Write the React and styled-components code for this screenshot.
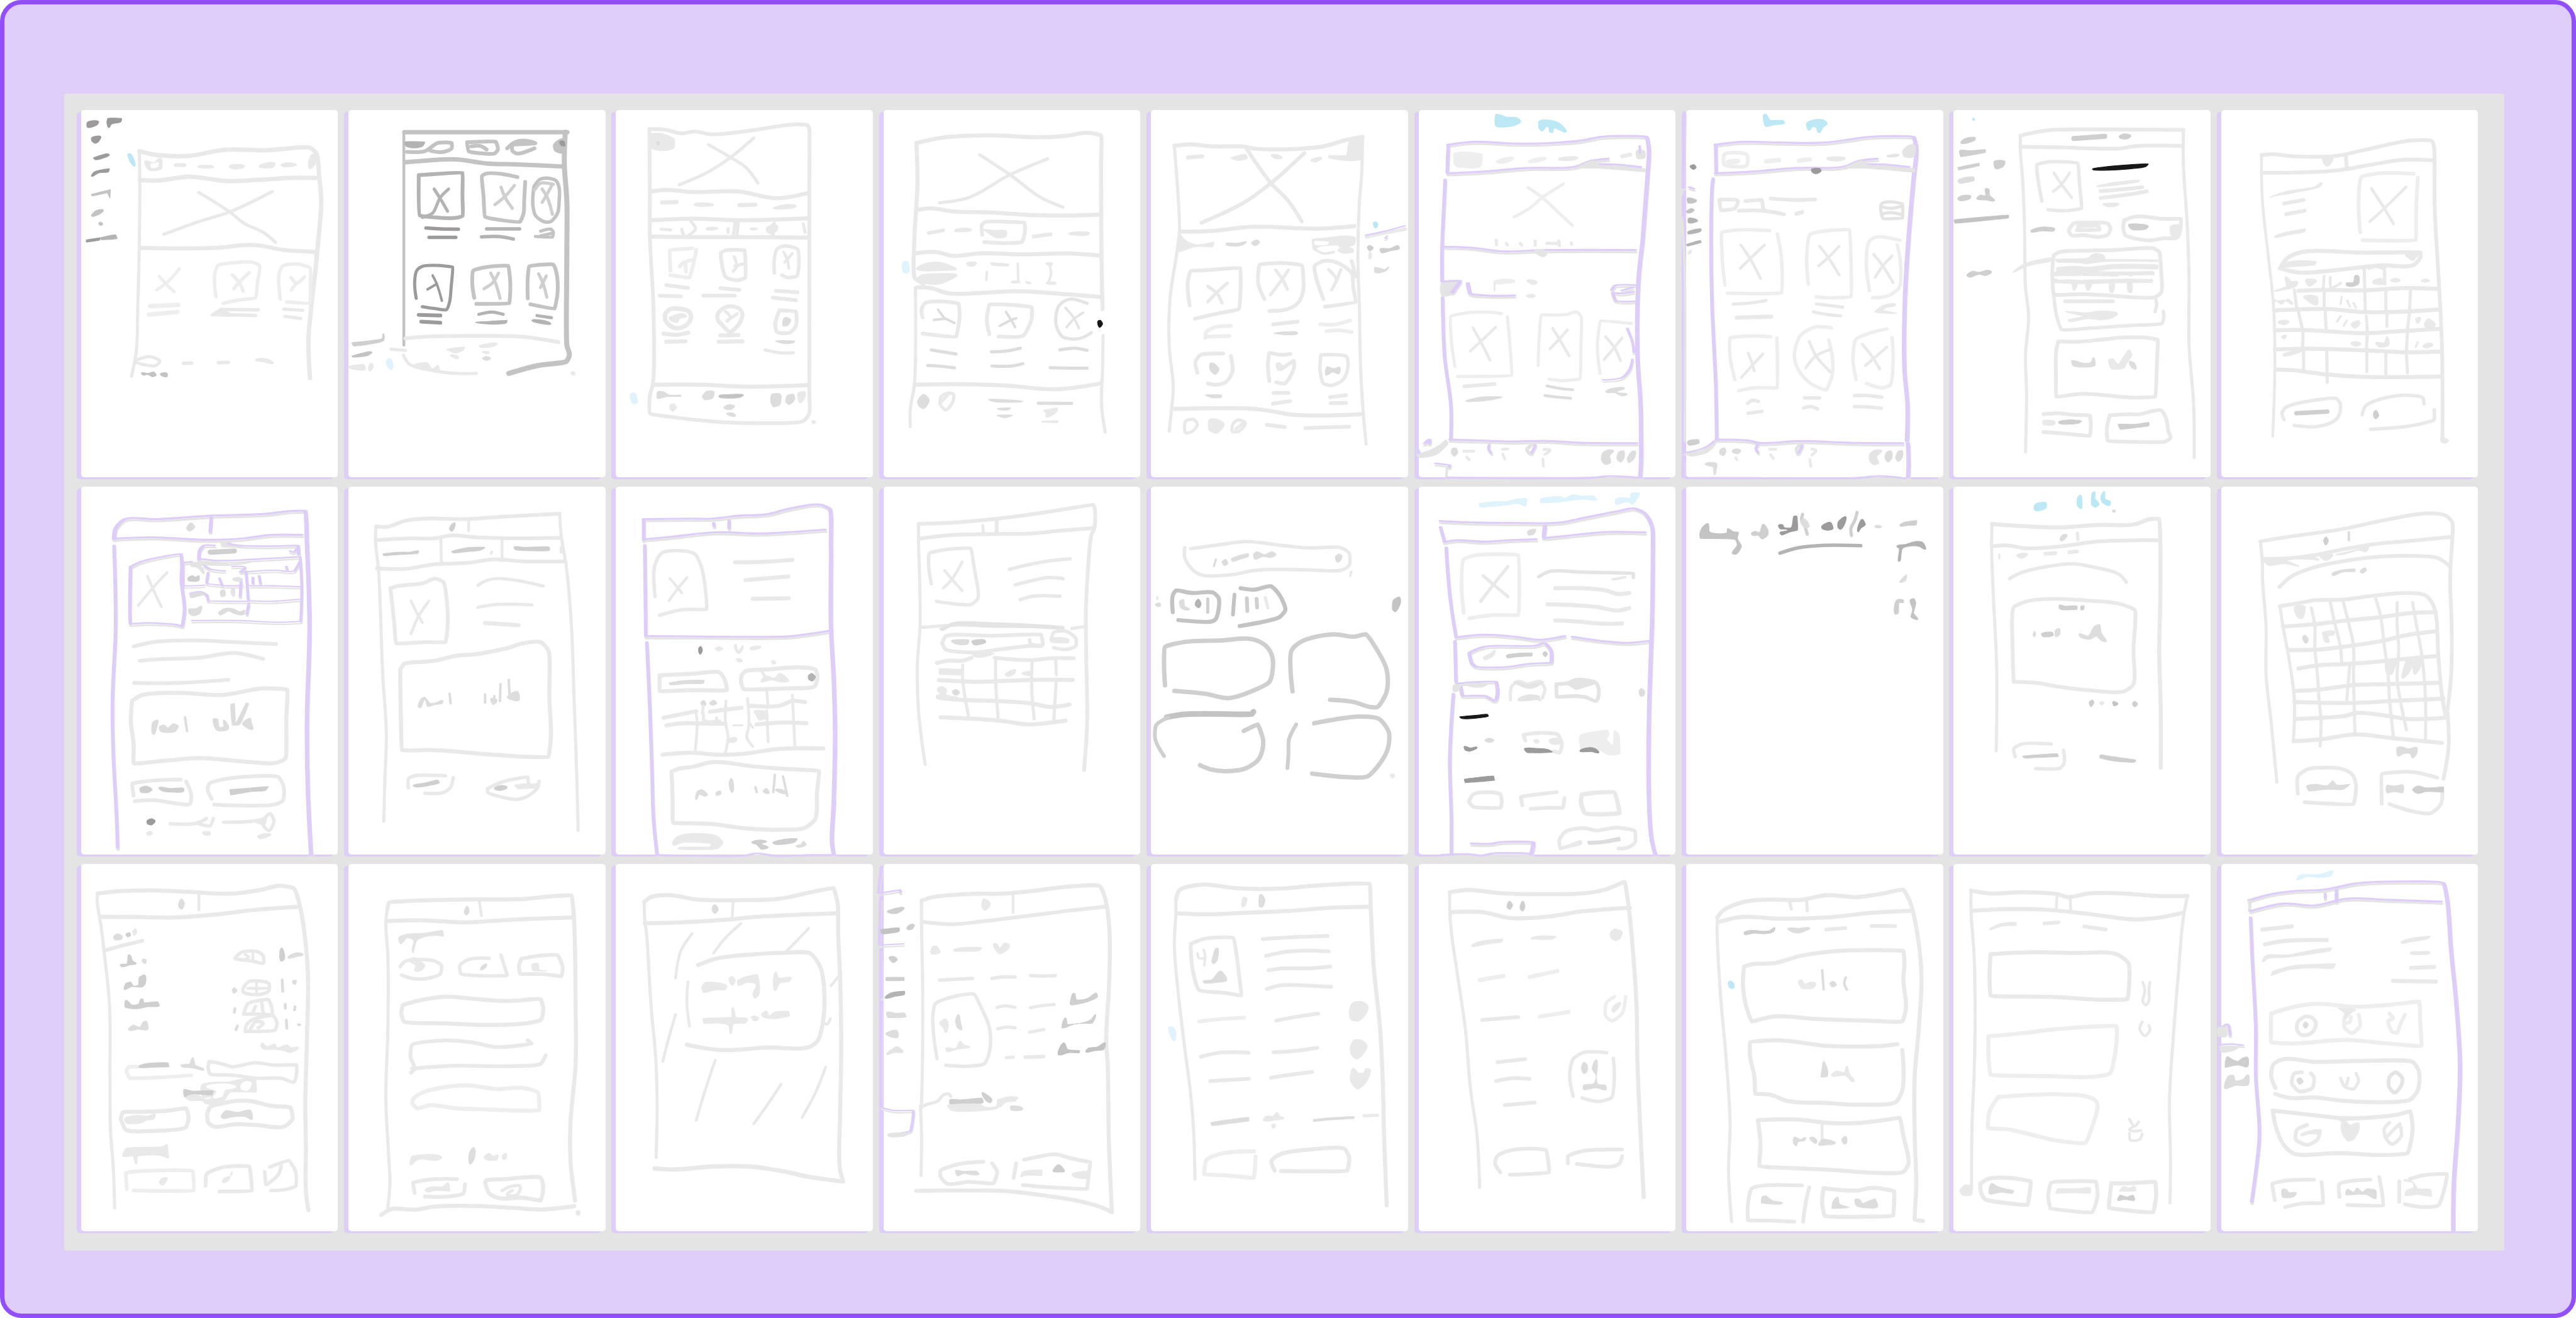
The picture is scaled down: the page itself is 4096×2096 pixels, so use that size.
import React from 'react';
import styled, { createGlobalStyle } from 'styled-components';

const GlobalStyle = createGlobalStyle`
  html, body { margin: 0; padding: 0; background: #ffffff; }
`;

const Frame = styled.main`
  box-sizing: border-box;
  width: 4096px;
  height: 2096px;
  padding: 142.2px 105px 0 94.7px;
  border: 7px solid #914ffb;
  border-radius: 34px;
  background: #deccf9;
`;

const Board = styled.section`
  box-sizing: border-box;
  display: grid;
  grid-template-columns: repeat(9, 408.6px);
  grid-template-rows: 583.5px 584.5px 584.5px;
  column-gap: 16.8px;
  row-gap: 15.3px;
  width: 3880px;
  height: 1839.5px;
  padding: 26.2px 27px;
  border-radius: 4px;
  background: #e4e4e4;
`;

const Sheet = styled.article`
  border-radius: 5px;
  background: #ffffff;
  box-shadow: -7px 3px 0 #deccf9;
`;

const Sketch = styled.svg`
  display: block;
  width: 100%;
  height: 100%;
  overflow: visible;
`;

const Pen = styled.path`
  fill: none;
  stroke: ${(p) => p.$tone};
  stroke-width: ${(p) => p.$weight}px;
  stroke-linecap: round;
  stroke-linejoin: round;
  vector-effect: non-scaling-stroke;
`;

const Marker = styled.path`
  fill: none;
  stroke: ${(p) => p.$tone};
  stroke-width: ${(p) => p.$weight}px;
  stroke-linecap: round;
  stroke-linejoin: round;
`;

const Blot = styled.path`
  fill: ${(p) => p.$tone};
  stroke: ${(p) => p.$tone};
  stroke-width: 1.2px;
  stroke-linejoin: round;
  vector-effect: non-scaling-stroke;
`;

function Mark({ mark }) {
  if (mark.kind === 'blot') return <Blot d={mark.d} $tone={mark.tone} />;
  if (mark.kind === 'marker') return <Marker d={mark.d} $tone={mark.tone} $weight={mark.weight} />;
  return <Pen d={mark.d} $tone={mark.tone} $weight={mark.weight} />;
}

function SketchSheet({ index, text }) {
  const column = index % 9;
  const firstRow = index < 9;
  const left = (10.5 + 497.7 * column - 1490 * Math.floor(column / 3)) * (1568 / 1500);
  const marks = readSheet(text);
  return (
    <Sheet>
      <Sketch
        viewBox={`${left} ${firstRow ? 20.5 : 17} 499.7 ${firstRow ? 1529 : 1532}`}
        preserveAspectRatio="none"
        aria-hidden="true"
      >
        <g transform="translate(1 9)">
          {marks.filter((m) => m.kind === 'marker').map((m, i) => (
            <Marker key={i} d={m.d} $tone="#e4e4e4" $weight={m.weight} />
          ))}
        </g>
        {marks.map((m, i) => (
          <Mark key={i} mark={m} />
        ))}
      </Sketch>
    </Sheet>
  );
}

export default function App() {
  return (
    <>
      <GlobalStyle />
      <Frame>
        <Board>
          {SHEETS.map((text, i) => (
            <SketchSheet key={i} index={i} text={text} />
          ))}
        </Board>
      </Frame>
    </>
  );
}

const TONES = {
  w: '#ffffff', o: '#eeeeee', l: '#e9e9e9', n: '#e4e4e4', m: '#dddddd', d: '#cfcfcf',
  h: '#c3c3c3', j: '#b3b3b3', k: '#9c9a9b', x: '#171717', b: '#bce8f6', c: '#def3fb', v: '#deccf9',
};

/* Sheets are taller than their units, so angles are measured after this squeeze. */
const SQUEEZE = 0.467;

/* Smooth line through points: gentle bends stay soft, sharp turns become tight corners.
   "!" marks a hard corner, a trailing "z" closes the line. */
function trace(source, blot) {
  const closed = blot || source.endsWith('z');
  const pts = source.replace('z', '').trim().split(/\s+/).map((s) => {
    const [x, y] = s.replace('!', '').split(',').map(Number);
    return { x, y: y * SQUEEZE, hard: s.endsWith('!') };
  });
  const n = pts.length;
  const at = (i) => (closed ? pts[(i + n) % n] : pts[Math.max(0, Math.min(n - 1, i))]);
  const unit = (a, b) => {
    const len = Math.hypot(b.x - a.x, b.y - a.y);
    return len ? { x: (b.x - a.x) / len, y: (b.y - a.y) / len, len } : { x: 0, y: 0, len: 0 };
  };
  const handle = (i, sign, len) => {
    const p = at(i);
    const a = unit(at(i - 1), p);
    const b = unit(p, at(i + 1));
    if (p.hard || !a.len || !b.len) return [p.x, p.y];
    const tx = a.x + b.x;
    const ty = a.y + b.y;
    const t = Math.hypot(tx, ty) || 1;
    const bend = a.x * b.x + a.y * b.y;
    const small = Math.max(a.len, b.len) < 26;
    const soft = small ? Math.max(0.6, bend) : Math.max(0.12, bend);
    const k = Math.min(len * 0.34, Math.min(a.len, b.len) * 0.9) * soft;
    return [p.x + (sign * tx * k) / t, p.y + (sign * ty * k) / t];
  };
  const fmt = (x, y) => `${x.toFixed(1)} ${(y / SQUEEZE).toFixed(1)}`;
  let out = `M${fmt(pts[0].x, pts[0].y)}`;
  const last = closed ? n : n - 1;
  for (let i = 0; i !== last; i += 1) {
    const p = at(i);
    const q = at(i + 1);
    const len = Math.hypot(q.x - p.x, q.y - p.y);
    out += `C${fmt(...handle(i, 1, len))} ${fmt(...handle(i + 1, -1, len))} ${fmt(q.x, q.y)}`;
  }
  return closed ? `${out}Z` : out;
}

/* Each line is a tone letter plus a weight (or "f" for a filled blot), then strokes split by "|". */
function readSheet(text) {
  const marks = [];
  text.split('\n').forEach((raw) => {
    const line = raw.trim();
    if (!line) return;
    const gap = line.indexOf(' ');
    const head = line.slice(0, gap);
    const blot = head[1] === 'f';
    const marker = head[0] === 'v' && !blot;
    const size = parseFloat(head.slice(1)) || 0;
    line.slice(gap + 1).split('|').forEach((part) => {
      marks.push({
        d: trace(part.trim(), blot),
        tone: TONES[head[0]],
        kind: blot ? 'blot' : marker ? 'marker' : 'pen',
        weight: marker ? size * 1.4 : size,
      });
    });
  });
  return marks;
}

const SHEETS = [
  // 1: landing page with hero
  `kf 23,72 45,68 42,82 23,92 | 63,55 90,56 88,70 70,79 65,94 61,72 | 31,137 49,131 46,148 39,159 32,150 | 35,220 62,202 66,208 52,222 38,227 | 31,295 36,279 66,265 64,278 46,282 33,297
  hf 31,372 68,352! 67,387! 62,365! 32,379 | 31,461 40,440 54,437 50,450 34,464 | 45,492 49,487 53,496 48,501
  kf 21,562 48,553! 47,562 21,571
  jf 49,552 78,540 81,556 50,561
  bf 102,204 107,203 115,235 115,255 106,235
  l7 124,192 150,205 218,212 290,186 370,188 455,177 468,200 474,300 478,400 474,520 466,700 458,850 453,980 456,1138
  l5 124,192! 125,300 124,600 121,850 118,1030 109,1130
  l7 125,312 160,314 222,298 292,316 350,312 425,303 474,304
  l6.5 125,595 270,595 348,583 410,605 468,612 468,630
  l5 240,364 300,445 330,495 365,530 389,572 | 383,360 300,445 240,485 172,538
  lf 135,232 153,240 162,221 167,222 167,265 145,273 138,260 | 453,240 460,205 468,210 466,245 456,266 | 357,255 372,240 388,243 385,258 362,261
  wf 147,246 153,244 161,240 160,255 148,260
  l6 195,250 212,250
  lf 238,256 252,251 269,257 255,263 | 299,256 314,247 329,255 318,265 304,264 | 399,250 415,240 430,249 418,256 404,256
  o5 158,770 180,735 202,682 | 163,714 176,745 192,778
  o5.5 273,800 271,700 277,668 345,655 358,670 354,740 350,803 318,812 287,826 | 305,708 318,738 326,775 | 338,698 320,735 308,765
  o5.5 398,808 396,700 403,670 430,662 456,678 457,750 455,825 410,820 | 419,718 430,742 445,716 | 428,745 420,770
  o7 145,838 200,832 | 143,873 198,862
  l5.5 282,852 355,853 | 300,874 350,877
  lf 263,875 282,850 300,868 300,880 265,878
  l5 405,850 442,855 | 407,880 438,889
  l5 121,1060 145,1048 164,1068 155,1086 130,1080 118,1072
  l5.5 210,1076 226,1075 | 278,1073 297,1072
  lf 350,1062 362,1055 380,1064 385,1076 365,1070
  hf 128,1115 140,1118 152,1112 157,1125 150,1132 140,1122 132,1126 | 165,1120 178,1117 178,1132 168,1128`,

  // 2: catalogue
  `h7 640,113 957,113!
  h4.5 639,113 639,600 639,1000
  h8 953,113! 951,240 956,400 956,600 956,1000 961,1040 955,1068 900,1085 843,1118
  h7 641,238 690,230 740,226 800,243 860,247 950,256
  jf 641,155 652,152 680,155 675,172 655,178 643,170
  h6 645,195 680,192 705,158 732,158 732,180 712,196 690,190 | 762,155 818,153 822,185 815,202 765,192 762,155 | 770,172 788,170 800,185 | 840,180 855,155 875,148 895,158 850,165 850,190 860,202 893,180
  hf 930,165 947,140 952,170 948,200 932,190
  kf 942,152 950,150 952,170 945,168
  j6 668,292 753,283 753,380 753,462 740,470 700,468 670,460 668,292
  h6 860,300 830,287 800,285 791,295 794,380 797,465 865,486 872,450 873,400 875,320
  h5.5 892,340 903,310 918,304 935,315 941,345 941,400 938,450 925,485 912,486 895,460 890,420 890,380 892,340
  j5 698,350 710,390 724,442 | 726,350 710,385 695,450 675,468
  d5 828,342 836,385 850,430 | 854,335 836,380 816,415 | 908,350 918,385 928,455 | 926,338 915,380 908,405 | 893,355 905,325 930,330
  k5.5 682,512 710,516 745,517 | 688,551 740,551
  j5.5 800,516 864,516 | 790,549 825,548 852,558
  h5 905,525 925,517 930,530 928,550 895,547 | 905,545 925,535
  k5 663,805 660,740 664,690 675,672 700,668 734,675 731,760 728,820 722,852 700,848 675,840
  k4 695,710 703,745 713,815 | 703,745 685,768
  k6 668,874 710,877 | 673,902 710,907
  h6 776,803 772,740 774,690 800,675 842,670 846,740 844,825 780,828 | 880,805 880,720 883,672 930,665 936,700 938,780 932,848 885,830
  d5 808,700 818,745 826,805 | 823,700 812,740 795,765 | 901,703 910,745 917,800 | 916,712 905,760
  j5 785,872 810,862 832,872 | 898,877 926,886
  jf 778,905 800,902 840,897 838,908 810,913 | 888,897 905,895 922,905 925,912 905,910
  l6 642,972 690,964 790,962 870,965 940,988
  l5 638,1042 650,1080 700,1108 740,1118 780,1118
  lf 660,1080 685,1074 695,1100 705,1084 708,1105 685,1098 | 722,1018 757,1008 755,1020 740,1033 | 785,1005 800,995 821,994 815,1004 790,1010 | 730,1042 745,1048 745,1056 735,1052 | 792,1028 805,1028 805,1034 795,1034
  l5 614,1017 642,1022
  mf 792,1055 800,1047 808,1055 800,1064
  df 538,990 580,980 597,972 599,952 600,980 578,994 541,1003
  hf 538,1046 572,1027 577,1030 570,1042 540,1050
  lf 532,1092 550,1082 562,1082 564,1102 548,1103 | 575,1075 580,1085 573,1109 570,1100 | 965,1112 971,1112 971,1125 965,1122
  cf 605,1065 612,1055 618,1085 615,1102 607,1088`,

  // 3: hero and category bar
  `l6 1117,100 1150,103 1180,118 1205,110 1238,122 1300,110 1400,80 1425,85 1428,100 1428,350 1428,700 1428,1200 1427,1290 1415,1318 1320,1325 1240,1318 1150,1297 1118,1285 1118,1210 1124,1160 1125,850 1118,550 1118,370 1117,100
  lf 1117,120 1140,118 1165,140 1165,178 1145,190 1120,180
  mf 1130,155 1135,152 1138,163 1132,165
  l6.5 1120,360 1150,353 1200,362 1290,360 1365,388 1426,366 | 1122,480 1200,473 1290,480 1426,472 | 1124,548 1200,550 1290,550 1426,552 | 1128,1165 1220,1165 1300,1173 1424,1167
  l5 1232,165 1275,218 1305,260 1328,325 | 1320,137 1275,218 1230,280 1175,332
  l6.5 1142,406 1170,404 | 1292,417 1323,415
  lf 1204,414 1225,408 1242,415 1225,422 | 1358,428 1380,415 1403,420 1395,430 1360,432
  l5 1197,483 1207,515 1192,545 | 1180,518 1183,540 | 1284,484 1280,545 | 1270,515 1270,530 | 1290,484 1287,545 | 1360,492 1350,520 1358,540 | 1416,495 1420,530 | 1140,517 1158,520
  lf 1227,515 1240,508 1250,513 1237,522 | 1312,516 1320,511 1327,516 1320,522 | 1345,510 1365,500 1367,515 1358,535 1346,530
  o6 1158,690 1157,605 1200,597 | 1208,603 1203,660 1195,718 1158,708 | 1203,643 1182,658 1176,672 | 1187,655 1188,693
  l6 1256,615 1265,605 1302,605 1304,660 1303,720 1285,730 1265,715 1257,650 1256,615
  l5 1282,632 1287,672 1280,692 | 1304,660 1283,670
  l5.5 1360,700 1360,640 1365,600 1378,587 1405,600 1408,650 1404,712 1385,718 1375,708
  l4.5 1378,612 1386,650 1388,680 | 1395,618 1380,655
  l6 1150,750 1192,762 | 1137,794 1178,797 | 1255,763 1292,770 | 1222,794 1283,794 | 1363,774 1405,780 | 1357,802 1402,813
  l7 1148,870 1158,850 1180,850 1195,862 1198,885 1190,915 1172,930 1158,920 1148,895z
  lf 1155,885 1180,868 1190,880 1175,890 1172,905 1158,898
  l6.5 1250,870 1262,845 1275,838 1292,848 1298,870 1292,910 1273,945 1258,915 1250,895z | 1255,960 1290,958
  l5 1265,860 1275,885 1268,900 | 1288,870 1270,895
  l6.5 1145,952 1170,957 1193,948 | 1150,986 1187,984 | 1252,986 1298,984
  l6 1370,855 1402,860 1402,920 1390,948 1365,945 1362,910 1370,855
  mf 1380,885 1392,895 1386,918 1377,920
  mf 1362,983 1400,983 1398,990 1380,994
  l5 1342,1020 1370,1032 1397,1032
  mf 1133,1195 1145,1195 1155,1208 1178,1208 1178,1214 1150,1215 1133,1222 | 1220,1215 1228,1193 1243,1195 1240,1220 1225,1228
  hf 1252,1214 1275,1206 1300,1208 1295,1216 1270,1221
  lf 1157,1250 1165,1245 1170,1260 1162,1276 1157,1265
  mf 1262,1258 1272,1248 1283,1255 1275,1268 1264,1266 | 1267,1285 1280,1284 1285,1295 1275,1296 | 1355,1205 1372,1205 1370,1250 1358,1257 1353,1235 | 1385,1210 1397,1205 1400,1225 1388,1248 1382,1235
  lf 1406,1200 1420,1195 1418,1225 1410,1242 1406,1225 | 1433,1315 1441,1320 1435,1328
  cf 1080,1205 1088,1200 1093,1240 1085,1244`,

  // 4: storefront with promo
  `l6.5 78,158 130,135 220,126 320,134 370,128 410,115 437,127 437,250 438,640 440,850 | 78,158! 80,330 74,560 75,720 92,745
  l6.5 78,438 105,430 150,443 220,447 300,458 375,460 438,456 | 78,617 115,612 150,628 200,618 290,622 375,618 438,628 | 78,760 105,762 140,784 200,783 270,775 370,788 440,800
  l5 76,762 74,1165 66,1270 66,1340 | 441,960 440,1100 438,1250 445,1362
  l6.5 75,1165 160,1163 250,1168 350,1184 435,1160
  l5 201,207 260,290 320,385 363,425 | 333,224 260,290 180,385 123,407
  l6 102,533 130,522 | 306,548 339,538
  lf 374,536 390,528 415,534 410,542 385,542 | 152,525 170,512 185,520 165,528
  l6 206,540 205,500 212,487 250,486 288,490 289,530 283,570 255,575 210,571
  lf 207,520 228,522 253,525 252,548 232,552 212,525
  lf 78,683 95,660 125,655 155,680 155,687 88,690 | 88,707 155,703 157,712 125,745 100,745 80,725
  l4 215,695 214,728 | 275,662 276,735 | 336,662 340,700 334,740
  lf 175,660 195,658 190,670 180,670 | 222,657 258,662 257,670 225,667 | 262,737 278,733 280,738 | 290,737 301,742 297,745 | 330,742 348,738 350,744 | 330,660 343,659 340,670
  l6 90,885 88,850 95,825 125,818 160,828 162,880 155,965 90,952 | 220,955 215,900 220,832 260,832 302,842 302,890 285,962 238,964
  m4 120,852 133,890 | 133,890 112,895 | 133,888 152,908 | 252,862 262,895 270,925 | 262,895 240,920 | 262,895 272,888
  n5 410,826 378,808 360,825 352,850 350,920 362,965 385,975 405,965 418,948
  n4 368,845 385,890 394,930 | 402,865 385,890 370,925
  xf 431,900 436,897 440,912 434,926 431,915
  m5 107,1020 155,1037 | 100,1085 125,1088 152,1095 | 224,1028 255,1024 280,1013 | 225,1087 265,1087 285,1077 | 357,1020 385,1013 410,1022 | 338,1094 380,1096 410,1096
  mf 80,1235 92,1205 103,1230 92,1265 83,1255
  l5 140,1200 150,1205 148,1240 135,1270 124,1245 126,1215z | 140,1205 125,1240
  mf 218,1227 255,1228 285,1235 230,1236 | 235,1264 262,1262 255,1271 238,1268 | 235,1293 265,1293 250,1303
  m5 315,1242 380,1243
  lf 325,1272 353,1262 350,1280 330,1300 330,1285 | 322,1317 353,1315 353,1323 322,1321
  cf 52,655 60,650 64,690 60,700 53,697`,

  // 5: storefront with tall hero
  `l6.5 580,170 610,163 655,172 710,172 740,182 820,182 870,172 915,145 946,132
  l5 580,170! 590,520 586,600 572,800 570,1000 578,1180 575,1260 570,1358 | 946,132! 944,300 940,400 937,640 940,850 942,1080 948,1300 953,1412
  lf 920,155 946,140 945,225 925,232 880,220 880,210 915,210
  l6.5 607,218 634,213
  lf 690,220 718,205 722,220 700,230 | 768,208 785,210 790,220 775,222 | 845,232 855,220 867,220 855,237
  l6 720,180 768,325 800,395 828,485 | 833,200 768,325 720,400 633,490
  l6.5 592,527 655,524 730,507 860,515 930,504
  lf 590,535 600,560 625,582 658,570 655,590 620,590 590,612
  mf 680,580 705,575 720,570 712,583 690,587 | 730,575 740,562 746,570 738,586
  lf 848,560 880,552 915,545 932,552 930,580 905,592 880,590 850,600
  wf 853,568 880,570 878,580 853,580 | 858,600 880,588 900,592 880,602 870,612
  l4 852,600 870,618 890,612
  lf 898,605 915,590 928,600 928,612 905,616
  l6 610,835 606,740 612,692 640,688 708,680 705,850 665,868 620,890 | 755,808 743,740 746,665 790,658 828,668 830,780 820,825 800,850 765,858 | 870,808 856,720 853,670 870,650 895,655 925,700 928,760 933,820 873,840 | 925,650 933,715
  l5 645,755 663,785 673,825 | 683,742 663,780 645,820 | 777,687 790,725 800,768 | 802,687 790,725 767,790 | 880,685 895,725 886,770 | 904,685 895,735
  o6 640,970 642,945 660,925 690,920 | 645,965 687,962
  l6 772,914 820,902
  mf 774,950 795,945 820,950 800,957
  o6 864,913 890,915 922,897 | 876,942 900,938 925,946
  l6 625,1115 621,1070 630,1042 675,1035 | 690,1045 693,1110 680,1155 662,1165 645,1160
  mf 650,1075 656,1075 667,1100 660,1122 650,1105
  l6 765,1150 762,1090 765,1032 785,1040 806,1037 | 778,1155 795,1160 808,1120 813,1090 812,1066 805,1075 788,1100
  lf 778,1078 785,1072 790,1085 812,1065 790,1100 782,1105
  l5.5 863,1100 865,1042 890,1040 915,1048 917,1100 908,1145 885,1168 870,1160 863,1100
  mf 877,1090 890,1098 902,1092 900,1120 888,1112 875,1125
  mf 640,1208 672,1208 672,1216 655,1220
  l6 773,1199 802,1199 | 772,1244 805,1233 | 883,1217 914,1209 | 884,1242 914,1241
  l6.5 580,1266 720,1264 760,1272 810,1290 942,1288
  l5 600,1330 603,1315 618,1310 625,1330 615,1360 602,1365z | 695,1325 705,1312 718,1325 705,1360 693,1360z | 700,1350 717,1320
  lf 648,1310 662,1308 677,1330 662,1368 648,1355
  l6 760,1332 795,1342 | 835,1346 920,1340
  bf 967,490 973,487 976,500 971,513
  l5 953,550 985,535 1030,517
  v4 953,542 990,525 1028,503
  v3 994,545 990,555
  df 980,600 1000,597 1015,585 1018,597 1000,607 983,615 | 955,592 960,585 967,595 960,607
  lf 960,610 964,625 960,643
  mf 970,677 990,685 997,675 992,690 970,697`,

  // 6: storefront with carousel
  `v6 1112,165 1160,153 1240,160 1310,158 1370,148 1410,132 1498,133 1502,180 1500,280 1490,560 1482,720 1480,1050 1486,1250 1487,1400 1487,1480 1485,1552
  v5 1112,165! 1110,280 | 1106,310 1104,400 1100,590 1100,735 | 1101,800 1105,1050 1117,1250 1117,1395
  v6 1112,284 1180,277 1265,262 1360,256 1390,232 1422,224 | 1405,246 1440,248 1485,258 | 1100,590 1160,595 1215,609 1300,604 1475,604 | 1116,1394 1180,1398 1230,1402 1300,1399 1370,1407 1478,1409
  nf 1360,262 1395,232 1405,250 1495,265 1495,278 1395,262
  of 1123,200 1150,195 1178,205 1175,255 1150,262 1125,252
  of 1205,235 1222,220 1240,220 1225,240 1208,242 | 1267,235 1285,220 1303,222 1285,237 1270,240
  lf 1326,225 1345,215 1364,220 1345,231
  l6 1450,213 1466,206
  nf 1478,190 1494,192 1494,220 1480,222
  v3.5 1484,170 1485,200
  o5 1267,343 1295,385 1330,455 1353,500 | 1336,328 1295,385 1270,430 1240,466
  l5 1205,563 1206,582 | 1225,577 1227,583 | 1252,577 1255,583 | 1281,567 1281,583 | 1304,576 1325,576 | 1327,566 1328,585 | 1351,574 1352,580
  nf 1280,608 1305,612 1298,632
  nf 1098,745 1120,730 1130,740 1118,790 1100,795
  v6 1102,735 1135,732 1120,780 | 1150,742 1155,785 1185,793 1240,793
  l3 1202,772 1202,740
  of 1200,735 1220,725 1242,735 1225,742 1202,745
  lf 1265,730 1285,738 1280,748 1270,742 | 1264,795 1275,788 1282,795 1270,802
  v5 1430,770 1436,752 1476,750 | 1432,785 1438,815 1474,818 | 1434,782 1450,785 1472,778 | 1450,772 1470,760
  o5 1125,1090 1118,980 1117,880 1150,865 1190,863 1215,868 | 1227,882 1232,1000 1235,1125 1130,1131 | 1287,1085 1288,1000 1293,875 1340,873 1362,862 1370,880 1370,1000 1368,1140 1335,1148 1308,1142 | 1407,1118 1402,1000 1408,900 1468,910
  l4.5 1160,928 1175,985 1193,1062 | 1204,926 1175,985 1155,1025 | 1315,930 1328,975 1347,1045 | 1344,936 1328,975 1310,1015 | 1418,965 1435,1010 1447,1065 | 1450,970 1435,1010 1415,1060
  v4 1460,930 1470,985 1473,1030 | 1470,1060 1465,1100 1450,1135 1413,1145
  l6 1143,1172 1202,1162
  mf 1146,1232 1175,1217 1217,1217 1195,1228 1150,1236
  m4.5 1304,1170 1330,1181 1354,1186 | 1300,1210 1325,1217 1350,1222
  mf 1418,1195 1440,1177 1455,1180 1440,1195 1460,1205 1450,1212 1435,1198
  nf 1050,1458 1085,1430 1108,1395 1112,1410 1090,1455 1055,1468
  v5 1066,1410 1076,1394 1075,1410 | 1050,1425 1055,1450 | 1088,1493 1115,1500 1114,1508
  n4 1110,1510 1108,1552
  v5 1110,1552 1250,1553 1390,1552 1425,1546 1482,1552
  mf 1120,1430 1128,1430 1130,1450 1124,1463 1118,1450
  l4.5 1142,1442 1162,1442 | 1148,1467 1153,1478 | 1217,1434 1228,1433 | 1218,1455 1222,1475 | 1298,1435 1310,1438 1300,1455 | 1296,1475 1297,1505
  v4 1192,1415 1190,1430 1196,1450
  n6 1278,1412 1265,1435 1272,1455
  v4 1282,1416 1274,1450
  mf 1412,1450 1422,1437 1434,1440 1426,1460 1428,1490 1418,1498 1410,1480 | 1443,1448 1453,1440 1454,1470 1447,1488 1440,1475 | 1468,1445 1476,1442 1474,1470 1463,1490 1460,1475
  bf 1205,38 1212,40 1225,50 1245,52 1253,68 1242,84 1222,91 1205,88 | 1289,66 1310,63 1330,78 1342,110 1338,113 1325,100 1318,95 1315,115! 1309,112 1307,90 1303,90 1295,108 1289,100`,

  // 7: product listing
  `v6 75,165 125,153 200,156 290,156 330,145 375,132 460,133 465,180 460,300 450,550 443,800 442,1100 448,1250 447,1400
  v5 75,165! 76,282 | 70,305 68,340 66,560 68,850 75,1150 77,1395
  v6 75,284 145,277 230,262 325,256 355,232 388,224 | 370,246 405,248 450,258 | 77,1394 140,1398 160,1408 240,1400 335,1407 438,1409 | 449,1410 450,1500 449,1550
  nf 325,262 360,232 370,250 462,265 462,280 360,262
  o6 92,205 115,198 136,208 135,252 112,256 92,248z
  of 95,235 110,225 122,228 120,240 100,245
  o7 173,234 198,229 | 237,231 258,226
  lf 291,223 310,215 327,222 310,233
  nf 438,195 448,170 462,165 460,215 442,215 | 408,212 420,205 432,207 420,216
  kf 261,268 278,265 280,275 270,286 263,280 | 25,255 33,248 37,260 32,268
  v5 14,30 12,345 | 24,342 32,348
  n4 10,360 3,420 9,480 12,560 15,700 15,1400
  hf 20,388 38,398 35,405 21,407 | 18,445 28,431 33,438 22,450
  jf 22,472 40,482 32,490 22,490 | 20,530 35,518 47,517 45,527 22,537 | 18,580 45,564 47,572 20,587
  lf 21,612 28,605 28,612 22,622
  l6 82,395 95,393 118,400 112,430 85,438 82,395 | 133,400 165,395 168,435 200,450 | 120,440 165,440 208,455 | 182,389 225,395 268,393
  l6.5 232,453 243,446
  n5 398,410 415,403 438,412 438,470 400,472 396,440z | 400,425 415,430 436,422 | 400,452 418,448 436,456
  o5.5 93,750 88,650 87,530 120,520 180,523 | 195,537 203,640 203,782 180,785 98,784 | 255,745 252,640 258,540 285,525 335,520 338,640 338,798 300,803 270,799 | 374,773 368,660 373,570 385,550 433,563 | 428,582 434,650 432,760 410,795 380,803
  l4.5 124,583 142,640 162,722 | 170,583 142,640 123,680 | 277,588 294,635 315,708 | 315,588 294,635 275,670 | 382,622 400,670 420,740 | 418,628 400,670 385,718
  l5 109,829 140,825 173,814
  l6.5 116,886 183,881
  l5 271,828 322,842 | 265,862 290,872 318,878
  lf 384,862 400,835 425,832 405,845 400,855 428,868 410,868
  o5.5 112,1143 103,1050 103,970 140,962 182,965 | 194,970 195,1060 194,1178 150,1178 120,1190 | 300,928 268,925 240,960 228,1040 235,1100 260,1160 290,1188 302,1120 302,1050 295,980 | 348,1143 342,1060 348,975 375,950 408,932 | 418,968 420,1060 415,1165 400,1178 368,1160
  l4.5 138,1033 145,1070 150,1108 | 167,1037 148,1080 125,1135 | 257,985 270,1045 298,1112 | 296,1020 270,1045 250,1095 | 360,996 380,1050 394,1100 | 408,1008 380,1060 366,1085
  l5.5 137,1243 147,1230 158,1235 | 138,1284 165,1276 | 248,1220 277,1220 | 246,1262 260,1256 273,1266 | 345,1210 370,1210 398,1217 | 345,1256 370,1258 397,1263
  nf 15,1450 45,1440 65,1415 75,1405 60,1445 25,1462
  v4 12,1448 35,1440 60,1420 72,1400
  df 20,1402 42,1395 43,1407 22,1416
  mf 54,1496 77,1494 76,1520 73,1540 70,1508
  v5 12,1480 12,1552 50,1553 140,1553 250,1556 350,1553 390,1546 435,1552
  v4 157,1415 153,1430 158,1448
  n6 240,1412 232,1435 235,1455
  v4 244,1416 236,1450
  mf 84,1435 92,1428 95,1445 90,1460 83,1452 | 107,1440 116,1432 124,1440 118,1453 109,1448
  l4.5 114,1470 116,1477 | 180,1434 192,1434 | 182,1457 187,1473 | 262,1433 270,1440 262,1458 | 258,1477 260,1505
  nf 375,1452 385,1438 398,1440 388,1465 392,1492 382,1498 374,1480
  mf 407,1447 416,1441 418,1470 410,1487 404,1470 | 430,1443 438,1440 438,1468 430,1486 425,1470
  bf 168,40 173,38 180,62 206,64 209,75 190,82 172,88 | 252,75 265,62 285,62 292,78 285,90 278,115! 273,112 271,94 264,90 256,105`,

  // 8: product detail with notes
  `l6 668,127 700,112 730,103 985,103
  l5 668,127! 668,190 672,300 676,500 678,760 684,880 678,1040 680,1200 678,1445 | 985,103! 985,250 992,480 996,720 996,1000 1005,1250 1006,1468
  l6 668,174 740,176 860,181 890,171 984,170
  bf 575,55 578,55 579,63 576,64
  df 552,158 560,140 580,135 580,145 560,160 | 550,190 570,190 600,185 600,197 552,215 | 546,260 588,242 588,252 548,270 | 617,235 638,235 635,255 620,265 | 546,388 555,377 572,380 568,392 550,398
  mf 546,315 560,302 578,302 578,315 550,325
  df 583,390 590,375 600,377 600,348 607,350 608,375 618,398 600,395
  hf 539,478 645,458 645,470 541,492
  df 564,710 575,692 587,697 605,688 612,695 600,710 588,705 570,717
  d8 772,139 832,130
  df 860,130 870,120 883,128 875,141 862,138
  l5.5 710,400 703,320 700,248 725,236 780,243 783,330 787,430 755,440 722,436
  l4.5 733,282 748,330 768,385 | 764,282 748,330 732,360
  xf 808,266 830,258 870,250 917,245 912,256 880,266 840,271 810,270
  lf 816,337 850,322 900,312 898,320 860,332 818,340
  l6 824,358 860,352 905,342 | 824,387 870,375 914,359
  lf 828,413 845,408 860,412 845,424 832,419
  df 688,523 710,508 735,515 733,525 710,524 690,530
  l6 765,510 772,493 800,490 838,493 843,515 838,540 820,549 790,542 768,543 762,525 765,510 | 780,505 820,503 822,520 778,521
  df 878,500 895,495 917,505 912,516 885,518
  l6 870,480 890,465 905,464 945,474 980,474 978,530 972,553 945,555 920,564 872,542 868,515 870,480
  lf 960,505 978,500 978,548 962,545
  lf 653,698 675,662 730,635 730,650 680,672
  l6 733,625 745,612 800,606 850,604 925,596 938,612 940,640 942,700 942,780 930,800 905,802 850,795 795,788 733,790 730,700 733,625
  lf 736,642 800,637 808,622 818,618 832,630 832,642 936,645 936,652 830,652 800,660 740,656
  l8 742,685 770,680 800,684 850,673 932,674 | 738,703 800,702 870,704 924,702
  l7 735,732 780,737 850,733 922,732
  wf 737,662 760,659 790,663 770,666 740,672
  wf 739,717 750,714 760,720 750,726 740,724 | 778,718 788,712 795,720 785,728 | 831,719 838,714 845,720 | 858,716 868,711 880,716 868,720 | 884,717 905,711 930,713 930,722 900,722
  lf 768,735 778,735 776,765 772,772 769,755 | 795,735 807,735 802,770 798,772 | 842,735 850,735 848,780 843,780 | 877,735 884,735 884,782 878,778
  l5.5 733,795 736,850 740,890 748,935 800,930 870,920 943,910 947,885 946,860 | 930,800 933,830 930,860
  l6 755,818 848,818
  lf 755,860 800,865 820,858 845,860 857,868 845,888 825,895 800,890 765,903 760,895 790,880
  l6 742,984 780,986 830,976 870,968 915,970 935,978 934,1050 930,1215 880,1218 840,1210 790,1203 738,1215 737,1120 738,1020 742,984
  mf 768,1065 790,1075 805,1072 810,1052 813,1085 790,1092 770,1085
  lf 840,1060 848,1058 858,1080 868,1050 880,1020 885,1040 875,1075 870,1095 845,1098
  mf 880,1068 890,1075 893,1100 885,1095
  l6 713,1288 740,1284 770,1290 803,1294 805,1340 803,1378 760,1370 713,1362
  lf 712,1315 735,1318 735,1330 712,1330
  df 742,1322 760,1312 787,1316 782,1325 748,1329
  l6 842,1292 880,1288 900,1288 925,1275 942,1272 952,1310 956,1360 960,1385 950,1402 838,1398 836,1350 842,1292
  df 858,1330 890,1330 918,1322 918,1335 895,1343 862,1350`,

  // 9: size chart
  `l6 1136,208 1165,205 1190,212 1280,212 1330,190 1430,147 1468,150 1472,180 1473,430 1480,700 1487,1000 1488,1395
  lf 1485,1385 1500,1398 1494,1409 1486,1405
  l4.5 1136,208! 1138,400 1150,640 1160,850 1162,1100 1158,1380
  l6 1140,282 1225,280 1290,270 1350,248 1410,228 1472,230
  lf 1255,220 1275,220 1265,255 1258,245
  l6 1300,212 1302,260
  lf 1152,385 1180,362 1240,340 1254,323 1250,340 1200,365 1160,380
  l6 1180,410 1218,395 | 1184,455 1220,440
  lf 1161,548 1180,532 1222,516 1220,528 1190,540 1165,552
  o6 1328,530 1325,400 1330,300 1360,285 1432,286 | 1440,302 1437,430 1436,562 1333,563
  l4.5 1350,348 1375,430 1393,495 | 1417,342 1375,430 1347,485
  l6.5 1172,680 1185,640 1215,612 1260,608 1320,614 1380,614 1445,614 1445,635 1430,668 1370,668 1320,678 1270,690 1210,698 1172,680
  lf 1180,660 1210,648 1243,652 1240,665 1205,672 1175,675 | 1415,622 1442,620 1430,648
  l5 1336,680 1337,770 | 1375,676 1376,745 | 1345,680 1358,672 1372,680
  lf 1183,715 1195,735 1207,735 1203,755 1190,765 1160,775 1185,755 | 1222,728 1243,732 1235,750 1228,755
  l4.5 1258,712 1256,770 | 1270,718 1272,760 1290,742
  df 1301,742 1315,738 1318,710 1325,712 1325,745 1312,756 1302,752
  lf 1352,738 1370,722 1374,745 | 1387,730 1397,722 1406,730 1396,738 | 1447,732 1455,724 1463,732 1455,738
  l6.5 1208,774 1260,770 1330,772 1420,762 1480,766 | 1165,855 1230,850 1270,850 1330,862 1420,860 1482,852 | 1162,938 1230,938 1330,950 1420,940 1485,932 | 1162,1018 1230,1015 1340,1022 1420,1030 1485,1027 | 1165,1102 1200,1105 1260,1122 1330,1132 1485,1131
  l5 1200,770 1205,850 | 1258,775 1258,850 | 1337,772 1338,860 | 1378,775 1378,855 | 1426,770 1424,855 | 1208,860 1216,935 | 1260,860 1262,935 | 1340,880 1342,940 | 1380,865 1380,922 | 1424,865 1420,935 | 1217,945 1216,1015 | 1342,950 1340,1020 | 1420,945 1418,1020 | 1218,1025 1218,1100 | 1263,1025 1264,1155 | 1341,1030 1341,1110 | 1378,1040 1378,1130 | 1418,1038 1420,1115
  lf 1160,808 1175,830 1187,808 1197,830 1180,812 1160,818 | 1218,798 1232,792 1245,800 1245,832 1225,815 | 1168,905 1190,902 1180,915 | 1453,912 1460,890 1475,915 1470,925 1455,925 | 1436,890 1445,885 1440,910 | 1310,992 1320,985 1330,995 1320,1006 | 1358,990 1375,990 1380,965 1384,1000 1365,1008 | 1450,1005 1462,990 1470,1000 1455,1012 | 1175,965 1185,960 1180,975 | 1178,1042 1200,1025 1215,1020 1200,1038
  l3.5 1292,800 1290,828 | 1303,815 1308,840 | 1315,825 1320,845 | 1290,880 1283,902 | 1302,898 1296,920 | 1440,988 1436,1008
  lf 1310,915 1325,898 1328,910 1318,930
  l5.5 1180,1310 1176,1285 1182,1262 1205,1243 1282,1222 1290,1250 1285,1300 1270,1325 1240,1340 1200,1335
  d7 1204,1284 1264,1277
  l5.5 1332,1290 1338,1255 1380,1218 1430,1210 1450,1220 1452,1245 | 1472,1270 1472,1310 1430,1335 1348,1351
  df 1355,1278 1359,1272 1364,1295 1358,1307 1354,1295`,

  // 10: product detail with size table
  `v6 75,235 78,190 95,153 160,152 260,138 370,130 420,118 447,118 450,250 455,600 450,1000 452,1300 458,1552
  v5 75,262 78,600 72,900 73,1100 80,1400 82,1522
  v6 77,233 150,228 250,238 320,234 380,218 440,218
  mf 218,180 225,168 232,185 222,202 216,192
  v5 264,145 262,205
  v5 107,350 130,328 205,297 207,330 206,410 212,530 207,598 195,592 140,585 107,588 107,350
  l4.5 140,390 150,440 167,517 | 178,375 150,440 122,512
  nf 283,245 300,245 305,258 330,265 285,268
  v5 207,335 225,330 | 240,322 242,280 250,262 270,262 | 297,255 320,262 380,265 433,263 434,300 | 243,318 275,325 360,318 430,310
  nf 222,335 270,330 300,340 340,332 300,345 250,345 225,350
  d8 262,290 309,285
  v4 417,285 424,290 430,275 | 209,340 210,430 250,428 | 250,345 262,360 290,368 | 305,350 330,355 320,372 385,365 425,368 436,330 | 437,310 440,440 438,578 | 258,375 255,420 285,428 | 285,430 325,430 | 340,430 380,430 436,434 | 332,375 336,490 | 280,398 285,425 | 322,402 320,475 | 345,395 345,420 | 357,388 360,422 | 338,492 370,495 436,486
  v4 223,462 245,455 256,470 258,492 333,495 | 337,505 333,548 | 227,575 320,575 395,582 438,578 | 410,350 412,362
  nf 305,402 320,396 322,410 308,408 | 225,345 245,350 250,380 240,360 230,348
  df 219,396 228,388 233,394 240,388 240,408 219,408
  mf 222,470 232,462 250,462 235,475 225,480 | 220,528 235,525 245,515 242,545 228,555 221,545 | 278,545 290,525 305,525 320,538 329,532 327,550 310,547 298,535 282,552 | 282,452 289,447 291,470 284,475
  nf 303,445 308,440 308,475 303,465
  l6 113,683 150,665 225,657 310,665 390,673 | 125,743 160,736 240,730 310,710 365,735 | 114,835 200,835 297,822
  l6.5 110,910 130,885 200,876 285,885 365,858 412,863 410,980 408,1150 390,1168 330,1163 240,1148 180,1158 113,1170 113,1090 108,1000 110,910
  mf 150,1000 160,990 158,1020 153,1050 149,1045 | 163,1018 172,1010 180,1022 190,1005 200,1015 195,1035 180,1042 165,1035
  m4 213,978 217,1036
  mf 268,985 276,985 280,1020 288,1018 288,990 298,1018 296,1030 275,1033 | 302,925 309,920 312,1000 332,918 337,922 322,1000 318,1010 305,1010 | 340,982 342,1000 345,1028 325,1005
  l6 113,1305 110,1255 150,1242 205,1238 | 215,1245 225,1300 222,1340 200,1338 150,1323 115,1328
  df 125,1275 138,1265 149,1280 140,1292 127,1290 | 162,1272 185,1275 210,1274 210,1288 185,1290 168,1284
  l6 265,1318 257,1280 260,1255 285,1238 370,1222 395,1228 405,1270 403,1325 390,1340 360,1346 300,1345 270,1342
  df 300,1280 330,1275 375,1267 370,1282 340,1288 302,1302
  kf 139,1410 148,1401 155,1410 148,1427 140,1422
  l5.5 184,1421 235,1420 255,1400 | 240,1422 262,1430 268,1400 | 288,1415 340,1412 365,1402 378,1380 386,1410 376,1450 365,1430
  lf 345,1410 372,1395 368,1425 | 138,1460 146,1453 150,1463 143,1471 | 247,1458 262,1457 262,1468 250,1468 | 354,1475 370,1462 380,1467 370,1480 357,1483`,

  // 11: tabs and size table
  `l6 585,183 610,183 640,160 680,150 760,152 830,142 942,130
  l5 585,183! 584,240 590,370 598,800 605,1050 602,1250 600,1412 | 942,130! 945,220 955,350 965,600 970,900 975,1200 978,1450
  l6 585,240 650,232 700,232 730,220 780,228 860,232 944,230 | 587,357 640,360 700,340 760,335 815,320 870,328 950,328
  l4.5 711,235 712,335 | 830,235 830,325 | 765,155 765,200 | 945,270 945,290
  df 730,180 738,167 737,190 732,203 728,195
  df 598,297 630,290 650,290 668,285 666,295 630,300 600,304
  df 732,287 760,272 797,270 790,280 760,288 735,293 | 853,268 875,270 900,268 922,270 922,283 890,284 856,280
  lf 807,290 812,285 808,300
  l6 613,440 630,430 675,420 700,400 716,415 722,480 724,600 720,665 680,665 624,670 620,580 613,440
  l4.5 653,493 668,560 | 688,493 668,555 653,630 | 668,555 675,583
  l5 783,428 800,408 820,400 870,412 910,431 | 783,520 820,508 888,510
  l6.5 797,585 862,594
  l6.5 632,780 640,755 700,742 740,722 780,715 840,690 870,670 905,665 920,700 922,900 925,1060 920,1143 880,1143 800,1132 700,1115 636,1115 633,950 632,780
  mf 667,935 673,900 680,895 690,920 700,918 715,908 714,920 700,925 685,933 680,905 672,938
  m4 728,880 730,920 | 797,883 797,917 | 815,890 813,922 | 827,840 826,910 | 843,822 845,900
  mf 808,900 820,905 818,920 810,918 | 840,895 860,870 863,908 845,902
  l5.5 648,1272 648,1235 660,1222 720,1222 | 735,1230 730,1270 715,1292 680,1295
  df 657,1262 680,1252 705,1240 708,1250 690,1262 662,1268
  l5.5 802,1275 830,1248 880,1228 883,1260 900,1262 885,1300 860,1320 820,1305 802,1290 802,1275 | 902,1245 900,1265
  lf 855,1262 885,1255 898,1270 860,1275
  df 815,1275 828,1262 840,1270 828,1283`,

  // 12: product detail with selectors
  `v6 1106,152 1190,150 1240,150 1290,138 1345,132 1390,108 1450,92 1468,110 1470,250 1470,600 1475,800 1478,1050 1475,1350 1472,1500 1476,1552
  v5 1106,152! 1106,240 | 1108,260 1110,640 | 1112,665 1118,950 1122,1200 1125,1400 1132,1552
  v6 1106,236 1150,228 1245,207 1330,212 1400,205 1458,196 | 1112,640 1200,641 1385,641 1430,630 1466,618
  v5 1242,168 1243,182 | 1272,158 1272,190
  l5.5 1128,475 1127,350 1140,295 1165,283 1205,297 1218,350 1228,528 1180,530 1137,553
  l4.5 1157,400 1173,440 1180,460 | 1190,396 1173,440 1155,492
  l6.5 1284,332 1340,330 1395,322 | 1304,406 1387,391 | 1318,484 1388,482
  kf 1213,690 1217,683 1220,700 1216,715 1213,705
  lf 1245,692 1252,684 1260,692 1252,702 | 1282,685 1285,673 1290,700 1299,680 1296,705 1290,713 | 1312,690 1322,682 1334,686 1325,695 1314,696 | 1286,736 1293,733 1298,745 1290,747 | 1354,745 1360,742 1363,752 1358,757
  l6.5 1137,803 1200,797 1252,790 1262,815 1268,864 1200,865 1137,868 1137,803
  mf 1155,835 1185,825 1224,824 1222,837 1190,838 1158,843
  l6.5 1297,800 1305,785 1350,778 1405,770 1440,780 1444,810 1438,850 1380,858 1300,860 1295,830 1297,800
  jf 1426,805 1433,795 1440,810 1434,827 1427,820
  lf 1334,830 1343,805 1360,815 1370,795 1388,828 1370,830 1355,822
  l4.5 1335,785 1345,820 | 1345,865 1348,930
  mf 1217,918 1223,908 1227,925 1222,933 | 1234,920 1242,907 1248,920 1240,928
  l6.5 1145,980 1180,965 1208,953 | 1150,1012 1180,1003 1240,1005 1265,1005 | 1235,955 1270,945 1296,938 | 1312,930 1370,930 1395,910 1420,915 | 1325,1008 1380,1000 1422,1003
  l4.5 1208,965 1210,1000 1206,1120 | 1222,930 1220,960 | 1266,910 1265,1000 1270,1060 1265,1125 | 1308,900 1310,1020 1306,1060 1318,1100 | 1345,950 1348,1080 | 1395,885 1400,1100 | 1222,960 1222,1000 | 1248,980 1246,1003 | 1318,1020 1310,1000
  lf 1222,985 1230,992 1255,990 1258,1005 1228,1003 | 1320,955 1345,955 1348,975 1330,990 1325,970 | 1270,1068 1287,1065 1285,1080 1270,1080
  l3 1280,1012 1298,1012
  l6.5 1143,1134 1200,1126 1250,1134 1300,1130 1370,1110 1455,1108
  l6.5 1160,1205 1175,1192 1200,1185 1240,1165 1320,1183 1370,1192 1447,1203 1443,1290 1440,1400 1420,1438 1370,1447 1300,1440 1240,1423 1163,1417 1162,1300 1160,1205
  mf 1208,1322 1210,1288 1218,1280 1230,1302 1225,1307 1214,1300 | 1272,1250 1276,1233 1281,1275 1278,1292 | 1246,1295 1255,1285 1256,1298 1248,1304
  m4 1323,1270 1326,1290 | 1361,1218 1358,1290 | 1377,1225 1385,1305
  mf 1338,1285 1345,1275 1350,1295 1340,1292 | 1362,1280 1378,1282 1382,1295 1368,1290
  lf 1162,1500 1172,1475 1205,1462 1250,1475 1260,1500 1250,1525 1172,1528 1175,1520 1235,1518 1238,1505 1180,1500 1164,1512
  df 1316,1500 1330,1490 1345,1497 1335,1505 1348,1520 1335,1528 1325,1508 | 1357,1500 1375,1488 1405,1484 1400,1498 1375,1508 1360,1507
  mf 1402,1515 1412,1508 1416,1495 1422,1508 1410,1520
  v5 1132,1552 1300,1555 1325,1545 1365,1556 1430,1552 1472,1552
  `,

  // 13: calendar
  `l6 82,172 160,165 250,147 340,120 422,92 425,110 424,190 418,220 408,500 408,700 410,1000 404,1198
  l5 82,172! 82,235 85,600 80,750 82,950 95,1175
  l6 84,233 150,218 230,214 300,212 360,200 420,190 | 234,160 234,212
  l4.5 207,178 208,208
  l5.5 107,422 102,350 103,295 140,278 184,274 190,350 198,480 185,508 165,508 117,495
  l4.5 133,366 147,403 167,450 | 167,330 147,403 130,440
  l5.5 259,361 290,345 330,328 377,318 | 270,426 310,405 335,395 363,400 | 280,488 305,473 357,474
  l5 88,603 110,600 135,595 | 380,608 405,600
  nf 123,610 150,583 220,583 300,590 365,600 365,612 300,605 220,603 145,600 128,617
  l6 128,670 135,640 150,634 230,638 320,633 323,678 300,680 240,695 190,708 135,695 128,670
  mf 146,660 165,654 180,658 178,672 155,673
  df 186,662 210,655 213,665 190,676
  l5.5 298,655 300,672 318,678 | 340,655 345,625 370,620 388,650 388,680 370,695 345,688
  lf 338,655 350,645 375,655 373,668 340,665
  lf 185,712 230,712 205,728 190,725
  l6.5 118,752 140,742 168,742 185,730 | 125,782 165,785 | 125,793 165,795 | 122,823 200,830 300,822 382,822 | 120,895 160,905 230,910 300,920 340,935 376,925 | 125,978 170,982 240,992 295,1008 340,1000 368,992
  l6 230,730 300,740 340,732 384,732
  l5 168,760 168,820 180,980 | 232,735 232,820 237,985 | 303,745 302,850 307,985 | 349,742 350,800 | 350,828 348,890 345,1000
  lf 250,800 260,785 271,780 268,798 255,808 | 283,795 295,787 303,790 300,803 288,802 | 118,860 127,850 136,860 135,880 125,882
  mf 148,870 155,862 162,875 156,886 150,882
  lf 116,890 135,884 145,890 158,895 160,905 125,905`,

  // 14: filter drawer
  `l5.5 600,272 600,310 612,355 630,383 690,384 740,365 830,363 905,365 920,345 920,295 905,272 840,272 790,262 720,246 670,258 612,275
  m3.5 661,320 657,348
  mf 673,330 680,320 684,338 677,345 | 691,318 705,305 724,297 724,308 710,318 693,328 | 734,300 740,288 755,300 770,288 778,300 768,312 752,308 737,320 | 893,310 900,298 906,305 903,325 897,332
  l4 924,372 922,388 | 547,478 547,485
  mf 543,508 552,502 553,515 547,516
  h6.5 577,540 577,470 583,450 615,460 655,458 666,480 666,530 660,570 650,580 588,573
  mf 590,495 598,487 600,515 610,528 603,532 592,520
  jf 622,495 627,486 632,505 628,522 621,512
  d5 645,485 645,540
  h6 697,467 694,550
  h6.5 709,440 735,446 768,432 785,470 796,530 785,560 707,598
  d6 721,482 722,535 | 740,485 741,520
  l5 757,480 762,522
  hf 1004,520 1006,490 1018,477 1020,500 1010,538 1005,532
  d7 562,845 560,760 562,685 600,664 670,658 730,652 755,675 768,710 772,750 765,830 730,870 685,898 640,880 580,868 | 810,870 806,780 808,700 825,665 850,645 890,632 930,642 952,632 975,700 993,780 993,870 975,935 960,935 930,915 883,905
  h9 565,978 600,966 730,965 734,955
  d6 568,978 545,1010 543,1070 560,1140
  d7 715,1035 742,1008 753,1080 745,1150 720,1190 680,1203 650,1195 630,1178
  d6 817,1008 803,1070 802,1130 800,1190
  d7 852,1003 890,988 940,975 978,985 997,1040 995,1110 980,1170 955,1225 920,1228 848,1213
  lf 1000,1220 1004,1213 1009,1222 1004,1232`,

  // 15: product detail with variants
  `v6 1097,160 1160,166 1240,168 1330,166 1380,145 1440,120 1475,108 1495,130 1508,180 1510,250 1508,600 1503,900 1502,1300 1507,1480 1515,1552
  v5 1097,185 1105,247 | 1108,270 1112,400 1118,520 1127,640 | 1125,660 1127,830 | 1122,880 1115,1150 1118,1400 1118,1552
  v6 1105,247 1130,240 1180,246 1230,240 1282,236 | 1300,180 1298,230 1340,222 1420,206 1494,208
  mf 1266,205 1272,197 1282,195 1278,215 1268,218
  o6 1142,543 1138,430 1142,320 1165,303 1248,303 1250,430 1248,552 1200,552 1153,566
  l5 1180,388 1200,425 1228,475 | 1228,350 1200,425 1175,495
  n5.5 1288,392 1310,370 1370,373 1472,378 1472,395
  lf 1430,400 1457,390 1458,397 1432,407
  l6.5 1320,440 1370,440 1420,450 1440,464 1464,460 | 1305,507 1350,510 1400,518 1440,533 1464,523 | 1320,574 1370,580 1410,588 1450,587
  v6 1128,645 1180,634 1240,642 1290,655 1338,640 | 1354,643 1410,660 1460,668 1502,660
  v5.5 1157,750 1153,710 1180,685 1280,680 1300,670 1312,700 1312,750 1270,755 1218,770 1165,766 1157,750
  lf 1180,730 1195,710 1203,698 1200,722 1183,738
  df 1225,720 1245,712 1275,710 1275,722 1245,726 1227,730 | 1296,712 1301,704 1305,715 1300,725
  v5.5 1130,838 1160,832 1205,830 1208,870 1203,908 1185,890 1140,888 1136,850
  nf 1143,838 1190,838 1180,850 1155,850 | 1122,845 1136,845 1130,870 1122,870
  l5 1233,905 1235,850 1250,828 1265,840 1290,828 1300,860 1295,898 | 1250,903 1270,890 1290,905
  nf 1240,830 1265,842 1298,828 1285,850 1270,858 1250,845 | 1248,905 1268,885 1290,895 1270,908
  n6 1322,840 1345,835 1360,822 1400,835 1405,870 1400,910 1380,895 1360,890 1323,893 1322,840
  nf 1342,838 1362,825 1398,838 1380,850 1360,862 1350,850
  mf 1483,870 1487,858 1494,870 1492,888 1486,890
  xf 1134,976 1165,970 1188,966 1190,973 1165,982 1138,983
  mf 1183,1074 1192,1065 1201,1074 1192,1083
  kf 1143,1100 1155,1106 1168,1103 1155,1119 1145,1115
  l6 1262,1075 1258,1052 1290,1043 1325,1050 1333,1090 1328,1125 1318,1120
  lf 1278,1075 1284,1070 1289,1080 1283,1087 | 1308,1075 1325,1065 1328,1088 1312,1088
  kf 1260,1110 1285,1108 1305,1112 1315,1123 1265,1124
  of 1368,1055 1390,1040 1422,1032 1425,1050 1420,1070 1432,1095 1435,1035 1443,1045 1446,1130 1425,1135 1400,1110 1370,1110
  kf 1368,1118 1380,1106 1397,1108 1405,1125 1390,1121
  kf 1143,1236 1200,1223 1202,1240 1145,1250
  l6 1152,1330 1160,1300 1185,1290 1213,1298 1216,1325 1214,1355 1160,1350 1152,1330 | 1256,1345 1253,1310 1290,1298 1323,1290 | 1338,1315 1335,1355 1305,1355 1272,1360
  l7 1372,1300 1400,1292 1435,1292 1442,1340 1445,1378 1378,1378 1370,1330 1372,1300
  l6 1330,1525 1328,1490 1340,1455 1375,1440 1400,1450 1440,1438 1475,1452 1475,1500 1460,1522 1443,1525
  lf 1328,1525 1345,1510 1370,1490 1372,1505 1350,1520
  mf 1383,1495 1410,1492 1445,1478 1447,1492 1410,1505 1385,1507
  v6 1158,1505 1195,1505 1215,1498 1278,1500 1273,1552 | 1100,1552 1155,1549 1175,1555 1200,1545 1268,1546
  cf 1172,87 1200,80 1225,78 1250,68 1264,68 1262,98 1250,88 1220,95 1174,102 | 1291,70 1305,62 1330,58 1338,65 1355,50 1370,56 1395,56 1401,73 1370,70 1330,80 1292,84 | 1437,72 1450,62 1465,65 1468,45 1483,45 1480,65 1470,90 1460,80 1438,90`,

  // 16: handwritten notes
  `hf 44,215 48,190 60,170 63,205 80,213 97,208 98,192 110,205 119,207 117,232 125,265 115,298 107,295 117,260 113,237 45,232
  df 144,212 152,203 160,208 167,173 177,200 176,220 165,235 158,220 147,220
  kf 197,178 205,175 208,187 222,187 227,140 233,140 234,198 220,205 203,218 200,208 215,198 200,192 | 281,182 298,165 303,192 295,198 282,192 | 313,165 328,142 327,165 318,195 313,188 | 355,165 360,153 366,175 357,190 352,205
  d5 244,132 242,155 248,180 253,215 | 350,124 345,160 338,190 339,220
  mf 240,160 247,150 257,183 250,190 | 384,182 392,178 398,184 390,189
  j5.5 200,294 235,272 280,262 357,263
  df 433,178 440,167 466,158 465,175 450,178 436,182
  jf 427,265 445,257 465,245 478,250 483,278 470,265 450,265 438,275 434,325 430,328 432,275
  mf 433,415 440,395 446,385 444,408 436,416
  df 423,510 428,488 440,490 440,500 432,500 430,545 424,548
  hf 453,490 460,483 464,500 460,545 468,570 455,560 458,530`,

  // 17: confirmation dialog
  `l6.5 613,172 650,178 740,187 820,176 890,174 920,152 938,152 940,240 940,500 938,700 941,950 941,1188
  l5 613,172! 612,260 615,450 622,780 621,1118
  l6 615,265 645,262 675,273 740,267 820,245 900,240 940,241
  mf 745,235 750,218 759,218 752,240 747,243
  l5 779,210 780,238
  l3.5 627,300 627,315
  lf 661,304 682,297 675,313 668,315
  l6 717,296 736,294 | 763,290 778,287
  l5.5 647,400 670,375 720,350 770,338 810,352 860,382 874,415
  l6 655,830 653,700 655,520 680,495 730,484 800,492 860,505 890,530 888,700 888,840 870,870 800,865 740,850 700,835 655,830!
  df 744,510 755,515 778,515 778,528 750,530 744,525 | 786,515 792,515 790,530 786,530
  mf 693,630 696,620 697,640 694,642 | 736,615 744,608 744,635 737,642 | 782,630 800,640 805,625 812,598 822,592 825,625 835,662 825,658 816,640 805,652 785,645
  df 709,630 730,624 732,636 712,642
  df 802,915 808,906 811,918 805,934
  hf 848,913 858,922 850,930
  lf 822,918 827,912 831,920 826,927
  df 886,920 890,912 896,922 890,935
  l5.5 658,1142 655,1110 670,1090 728,1090 | 752,1115 753,1170 745,1190 698,1192
  df 672,1140 700,1135 740,1130 742,1142 700,1145 676,1148
  df 823,1136 845,1142 893,1156 890,1165 850,1160 823,1148
  bf 696,92 718,84 718,105 700,118 695,112 | 780,60 785,52 788,75 786,108 780,100 778,80 | 808,42 813,38 813,65 821,90 815,102 807,95 | 825,55 831,37 833,70 843,78 842,95 830,88 825,72
  mf 847,116 852,114 852,123 848,123`,

  // 18: calendar picker
  `l6 1134,245 1190,225 1290,195 1390,150 1465,128 1495,138 1507,165 1508,200 1503,400 1506,600 1505,800 1498,945 | 1498,960 1500,1100 1490,1235
  l5 1134,245! 1138,340 1138,400 1145,600 1145,800 1155,1000 1166,1248
  l6 1140,318 1190,315 1240,302 1290,280 1350,258 1440,240 1505,226
  lf 1138,320 1175,315 1190,330 1210,350 1180,338 1150,345 | 1195,315 1230,308 1248,322 1235,320 | 1250,305 1262,325 1275,300 | 1280,300 1330,275 1345,262 1340,288 1325,282 1295,300
  l6 1171,435 1195,390 1240,352 1310,322 1370,308 1440,306 1480,315 1503,350
  mf 1273,380 1290,365 1318,360 1318,370 1295,372 1275,388 | 1328,370 1338,355 1340,365 1332,378
  df 1257,240 1262,226 1266,245 1261,260
  m4 1306,208 1306,240
  l6 1172,515 1210,502 1240,490 1290,488 1360,470 1420,460 1455,470 1470,510 1476,560 1480,720 1488,900 1495,980
  l5 1172,515! 1178,600 1190,740 1200,900 1198,1080
  l6.5 1178,600 1240,590 1300,575 1370,560 1420,545 1475,540 | 1188,698 1250,695 1310,680 1370,660 1420,635 1475,620 | 1208,775 1245,762 1310,755 1370,745 1415,735 1478,722 | 1202,868 1250,862 1310,845 1380,840 1480,835 | 1200,915 1320,918 1390,910 1490,900 | 1203,985 1300,972 1320,960 1380,972 1420,985 1492,980 | 1200,1078 1250,1070 1320,1050 1390,1065 1440,1075 1487,1085
  l5 1233,522 1240,600 1240,690 1245,800 1248,900 1252,1000 1250,1098 | 1270,500 1278,580 1290,690 1292,750 | 1295,495 1305,580 1315,680 1315,800 1318,1050 | 1358,480 1368,560 1375,680 1382,790 1385,900 1393,1065 | 1400,500 1400,600 1403,690 1400,820 1413,980 1418,1030 | 1430,500 1438,600 1448,720 1455,900 1455,1070 | 1308,760 1302,905
  lf 1200,520 1220,515 1216,565 1208,565 | 1255,625 1278,620 1277,635 1266,640 1268,665 1260,665 1256,645 | 1378,745 1400,740 1390,800 1380,795 | 1420,735 1430,735 1425,785 1410,815 1413,770 | 1432,745 1448,740 1440,790 1434,800
  mf 1217,640 1222,637 1227,655 1223,670 1218,660
  mf 1400,1105 1410,1102 1422,1110 1438,1103 1438,1130 1430,1148 1425,1130 1412,1130 1402,1140
  l6 1207,1297 1207,1225 1225,1195 1260,1188 1290,1192 1312,1215 1320,1260 1315,1340 1220,1332
  mf 1224,1265 1240,1258 1265,1262 1275,1243 1282,1260 1308,1258 1295,1278 1265,1278 1228,1285
  l6 1370,1338 1370,1215 1430,1206 1478,1230 | 1488,1290 1485,1340 1465,1378 1430,1370 1385,1340
  mf 1380,1262 1395,1265 1411,1260 1411,1292 1395,1288 1380,1292
  df 1430,1280 1440,1264 1455,1272 1490,1268 1490,1290 1455,1288 1440,1296`,

  // 19: order summary
  `l6.5 43,140 90,130 150,127 220,133 300,141 360,125 395,108 425,120 435,180 445,300 452,480 450,750 447,1000 448,1200 448,1380 453,1460
  l5 43,140! 42,170 50,280 55,370 66,600 67,900 68,1120 74,1300 76,1450
  l6.5 50,237 120,238 190,240 270,228 350,208 430,196
  mf 200,190 206,163 212,180 206,206
  l4.5 240,148 240,208
  mf 74,320 82,308 91,318 90,330 76,332
  df 98,310 105,303 107,315 101,320
  lf 111,298 117,287 119,305 114,314
  l6 60,376 95,355 130,337
  df 87,437 100,433 103,395 107,398 111,420 118,432 105,438 90,446 | 95,540 98,515 108,510 112,525 122,522 124,490 135,480 136,515 130,530 110,528 | 96,608 98,585 110,605 123,600 127,580 131,580 133,595 160,592 163,608 140,612 120,620 97,615
  mf 130,415 137,415 136,432 130,425 | 103,708 112,688 125,698 132,675 138,672 140,708 122,706 107,712
  l5.5 310,410 320,388 335,380 355,383 365,400 365,430 345,422 312,413 310,410
  l4.5 330,395 337,405 328,415 | 345,390 345,412
  df 397,395 401,367 406,390 406,415 400,422
  mf 413,408 430,387 443,395 430,403 | 305,540 309,533 314,545 308,556
  l5.5 326,535 335,510 360,505 376,515 376,545 365,558 340,560 326,550 326,535
  l4.5 352,515 352,550 | 335,535 372,535
  m4.5 402,500 403,548 | 408,602 408,618 | 410,668 411,702 | 310,620 309,635 | 315,692 312,708 | 427,612 426,625
  mf 422,505 429,502 428,518 423,515 | 431,685 438,685 436,692
  l5.5 327,643 335,600 375,582 381,610 383,645 355,643 327,643 | 350,610 345,635 | 362,590 365,640 | 330,715 332,690 345,665 385,650 392,680 388,710 330,715 | 340,705 350,675 365,680 355,700
  lf 360,775 363,763 372,778 388,768 392,782 412,770 418,782 434,782 430,792 418,803 405,795 390,790 365,788
  o6 105,908 99,880 103,865 120,862 | 105,910 150,908 225,898
  df 123,862 135,850 180,846 182,862 150,864 128,866
  mf 205,855 222,850 228,824 233,855 250,875 230,868 207,862
  l5.5 260,840 285,850 305,862 350,845 385,855 430,855 430,890 425,925 400,910 350,910 310,898 262,893 258,870 260,840
  lf 245,938 260,928 300,925 320,915 350,912 352,968 300,970 290,1000 265,1020 250,1010 265,990 248,990
  wf 255,945 262,938 300,935 312,945 290,960 285,985 268,990 275,965 | 322,938 332,922 342,930 335,960 322,955
  df 211,958 225,963 268,962 266,980 235,977 213,988
  lf 215,990 235,978 250,995 265,1010 240,1003 222,1003
  l6.5 88,1080 92,1052 130,1050 180,1045 215,1035 220,1075 214,1115 150,1130 98,1125 88,1080
  lf 95,1080 120,1065 140,1068 155,1060 152,1080 138,1085 130,1095 100,1098
  l6.5 256,1060 262,1030 285,1015 310,1005 340,1005 380,1025 418,1032 422,1080 405,1112 350,1105 310,1102 270,1112 258,1095 256,1060
  mf 283,1070 292,1045 315,1052 340,1043 343,1082 330,1070 310,1070 287,1078
  lf 92,1235 98,1203 170,1195 178,1185 181,1243 165,1232 120,1235 118,1268 112,1235
  o6 100,1372 98,1305 130,1297 228,1297 230,1378 170,1380 113,1378
  lf 163,1345 168,1328 178,1325 175,1345 168,1356
  l6 253,1358 255,1310 285,1282 338,1278 343,1378 280,1382
  lf 285,1340 290,1325 302,1318 305,1300 298,1335 288,1346
  l5.5 370,1352 368,1300 | 378,1280 415,1253 428,1300 428,1360 405,1375 380,1378 | 400,1275 395,1310 373,1352`,

  // 20: form
  `l6.5 607,205 610,178 640,172 760,165 870,163 925,152 965,148 970,250 973,600 973,850 963,1100 963,1250 972,1420
  l5 607,205! 604,260 608,400 608,700 604,1000 610,1250 612,1340 608,1450
  l6.5 605,255 680,252 760,260 840,250 970,240
  mf 758,205 762,193 766,215 761,230 757,220
  l4.5 786,175 790,232
  nf 629,325 640,312 680,305 714,294 716,318 705,315 680,320 665,335 657,388 655,375 658,335 645,325 633,350
  l5.5 632,445 640,425 660,413 | 635,480 655,494 685,494 710,475 712,440 700,422 665,415
  lf 650,420 672,425 680,440 672,462 660,462 662,440
  l5.5 805,410 765,415 748,440 750,475 790,483 838,482 | 828,397 840,480
  mf 788,458 792,440 800,434 798,450
  l6 868,412 900,400 938,398 948,450 945,485 910,476 865,475 863,440 868,412
  lf 888,435 900,432 902,458 918,462 890,462
  l6.5 637,605 660,590 720,570 780,580 840,588 905,580 910,620 906,665 880,680 800,688 730,682 640,675 634,640 637,605
  l6 880,752 888,765 820,780 770,760 720,752 655,770 652,820 660,870 653,887 | 655,870 740,858 830,860 905,850 915,815
  o6.5 655,1015 658,995 675,970 710,950 765,940 820,955 870,950 900,970 902,1043 860,1045 800,1040 740,1035 690,1022 665,1035 655,1015
  lf 652,1272 655,1235 670,1230 700,1228 713,1240 705,1252 665,1250
  mf 766,1225 775,1199 778,1215 774,1255 768,1268
  lf 795,1240 805,1223 812,1235 822,1230 820,1250 800,1250 | 830,1235 838,1222 838,1245 832,1248
  l6 660,1388 657,1345 690,1332 742,1330 | 758,1352 755,1390 725,1403 680,1403
  lf 680,1375 695,1362 715,1362 725,1345 728,1380 700,1378 685,1385
  l6.5 797,1345 800,1335 840,1330 880,1322 905,1325 910,1370 905,1420 870,1408 825,1410 805,1390 797,1345
  l5 830,1378 845,1362 865,1360 860,1395 840,1395 850,1378
  l6.5 595,1480 615,1455 660,1458 700,1445 770,1442 850,1450 910,1457 970,1443
  lf 974,1465 981,1463 981,1478 976,1482`,

  // 21: modal with overlay
  `l6.5 1107,175 1120,155 1155,147 1210,165 1290,168 1370,162 1430,135 1475,117 1483,180 1484,300 1488,500 1490,800 1488,1050 1487,1280 1494,1340
  l5 1107,175! 1108,250 1112,320 1120,600 1130,850 1132,1050 1130,1240
  l6.5 1108,264 1180,260 1290,245 1310,240 1370,232 1484,222
  l4.5 1280,170 1278,245
  mf 1239,200 1244,186 1251,205 1245,223 1240,215
  l4.5 1200,307 1178,380 1168,492 | 1295,265 1265,325 1242,388 | 1427,285 1400,345 1380,388 | 1192,508 1190,600 1195,693 | 1168,645 1155,740 1143,840 | 1245,835 1230,930 1208,1085 | 1373,935 1350,1010 1320,1100 | 1460,863 1440,970 1414,1073 | 1487,480 1470,525 | 1453,670 1462,685 1469,662
  l6.5 1212,438 1250,410 1310,395 1370,388 1430,390 1450,450 1457,550 1455,670 1445,750 1430,778 1410,786 1350,782 1265,793 1225,785 1190,770
  lf 1219,530 1225,512 1250,512 1268,525 1265,540 1245,542 1222,552 | 1272,495 1278,485 1284,505 1278,523 | 1288,505 1300,490 1327,478 1330,500 1330,560 1322,577 1318,560 1325,520 1308,510 1290,523 | 1358,500 1363,466 1368,492 1393,490 1390,505 1370,515 1362,545 | 1221,662 1250,658 1278,655 1279,615 1285,655 1308,662 1305,678 1280,685 1275,725 1271,690 1250,680 1223,682 | 1315,655 1322,650 1330,660 1322,672 | 1335,645 1345,630 1350,650 1360,635 1388,632 1390,650 1360,662 1338,655
  l7 1127,1286 1170,1290 1240,1278 1310,1278 1370,1295 1430,1322 1492,1340`,

  // 22: order review with notes
  `l6.5 88,170 110,155 180,142 250,140 320,125 380,110 435,110 445,160 453,280 453,500 447,760 450,850 452,1150 458,1465
  l5 88,170! 88,280 90,500 90,800 88,1015 | 86,1025 88,1150 87,1315
  l6 90,258 150,268 210,255 300,232 380,210 445,195
  lf 205,185 209,162 222,182 212,210 206,200
  l4.5 266,145 266,218
  v4.5 10,28 5,138 46,125 47,135
  v4 8,165 6,350 | 6,355 52,350 | 8,375 10,575 | 10,590 10,1030 30,1043 72,1045 66,1130 40,1140
  df 21,215 35,203 54,200 48,215 35,224 22,218 | 59,285 65,270 74,270 70,288 62,291
  hf 8,292 20,288 45,285 44,298 12,308
  df 25,405 35,403 41,415 34,428 28,420 | 19,490 54,490 54,503 19,503
  jf 17,575 28,555 55,548 55,560 38,568
  mf 20,635 40,640 55,638 58,655 22,657 | 18,725 30,712 40,710 42,740 25,735
  nf 20,810 30,790 40,778 52,800 35,803
  nf 22,1145 35,1138 65,1140 50,1153 25,1153
  lf 106,390 110,360 118,360 124,385 110,393 | 150,375 165,366 205,366 200,378 170,381 152,381 | 228,350 235,350 240,368 248,348 258,350 258,368 240,392 235,385
  l5.5 123,501 187,494 | 225,494 245,488 270,488 | 300,482 325,484 348,482
  l5.5 118,828 112,740 110,650 115,600 150,570 190,560 205,620 220,700 220,800 210,850 175,860 135,856
  l5 235,615 250,608 270,615 | 300,616 320,608 346,603 | 236,704 252,697 270,700 | 298,718 326,707 | 253,824 266,822
  l6 290,822 325,820
  lf 123,680 135,663 140,680 135,720 130,700
  mf 154,670 160,645 164,680 166,708 158,700
  lf 135,785 155,785 163,755 170,770 182,780 175,785 155,790 138,800
  df 377,600 382,557 386,557 389,582 410,578 428,555 430,570 412,590 380,605 | 361,700 368,658 371,685 400,680 418,665 426,645 420,680 390,682 365,700
  hf 354,812 365,762 372,790 395,795 395,803 375,803 | 407,800 412,785 430,780 445,762 442,790 425,795
  l5 86,1035 95,1022 120,1005 130,980 140,975 145,985 | 200,1020 210,1035 235,1030 240,1005 258,992 273,993
  df 143,1000 165,1000 205,993 208,1010 190,1017 143,1018 | 206,970 212,975 225,1000 222,1012 212,1000
  lf 138,1022 200,1018 205,1035 235,1035 200,1046 145,1044 | 240,1030 235,1000 270,990 272,1003 252,1010
  mf 261,1028 285,1037 262,1042
  l6 208,1258 160,1268 125,1295 125,1320 138,1350 180,1342 228,1348 235,1300 225,1265
  mf 154,1295 170,1298 195,1298 200,1310 185,1312 170,1307 158,1317
  l6 287,1250 320,1235 350,1227 380,1245 416,1260 413,1310 410,1370 340,1365 285,1355 | 272,1265 267,1325
  lf 281,1320 285,1300 322,1292 322,1315 290,1315 | 380,1310 395,1300 412,1300 410,1325 385,1322
  df 344,1298 354,1270 366,1298 355,1301
  l6.5 78,1379 170,1378 250,1380 330,1400 400,1425 440,1450 458,1468`,

  // 23: profile
  `l6.5 583,165 590,125 635,103 700,118 780,120 850,108 910,100 960,100 962,200 968,450 980,700 985,900 988,1150 993,1440
  l5 583,165! 583,225 580,350 585,500 600,780 612,980 618,1150 620,1330
  l6.5 585,222 645,227 720,220 800,213 880,200 960,195
  lf 711,178 715,155 721,160 718,190 712,196
  mf 745,190 748,143 756,165 752,195 746,196
  l6 612,350 640,328 695,325 700,380 706,480 710,565 680,555 628,542 615,450 612,350
  l4 637,375 640,400 638,440 | 625,390 628,410 640,408
  mf 653,425 660,370 665,368 663,420 656,433 | 636,505 652,500 670,463 682,502 665,510 638,513
  l6 752,330 800,323 878,317 | 758,400 800,382 840,378 880,381 | 763,460 790,452 840,452 883,444 | 760,538 785,523 840,524 885,529
  o6 628,674 670,663 716,658
  l6 778,670 820,653 860,641 | 632,820 670,803 724,804 | 773,802 820,795 858,783 | 650,922 725,912 | 768,908 800,897 848,884
  lf 920,630 927,595 945,590 957,610 952,645 938,672 923,665
  lf 922,780 930,750 945,752 955,775 945,815 935,830 925,815
  lf 922,910 928,868 938,888 948,888 952,870 961,872 955,920 937,955 926,935
  cf 569,698 575,695 582,710 580,755 575,745
  mf 651,1095 690,1082 725,1073 725,1088 690,1098 653,1108
  lf 753,1085 758,1068 772,1068 780,1052 785,1068 793,1075 775,1085 | 769,1108 774,1100 777,1110 772,1118
  m4.5 852,1086 880,1080 928,1074
  l5 949,1067 975,1064
  o6.5 735,1215 670,1225 643,1250 638,1310 680,1315 735,1325 738,1237
  l6.5 775,1295 769,1255 785,1228 840,1208 910,1203 920,1240 916,1295 850,1298 788,1297`,

  // 24: activity list
  `l6.5 1115,135 1150,125 1210,138 1290,143 1380,138 1415,125 1455,92 1463,200 1470,350 1478,600 1480,850 1485,1100 1492,1405
  l5 1115,135! 1115,215 1118,300 1130,480 1145,700 1155,950 1168,1150 1173,1365
  l6.5 1117,218 1180,218 1230,242 1310,235 1370,215 1465,200
  df 1227,185 1231,172 1237,188 1232,206 1227,200 | 1252,190 1257,172 1261,195 1257,213 1252,205
  lf 1427,305 1435,288 1450,300 1447,325 1437,337 1428,325
  lf 1157,358 1170,342 1218,330 1216,342 1190,350 1160,362 | 1273,328 1290,317 1322,320 1315,330 1278,330
  o6.5 1173,502 1200,490 1220,484 | 1270,488 1324,463 | 1290,653 1346,634
  l6 1178,667 1248,655
  o5.5 1435,570 1420,595 1418,650 1430,670 1450,640 1457,570
  lf 1430,630 1433,610 1447,595 1442,620 1433,635
  l6 1208,843 1262,830 | 1205,922 1235,910 1270,913 | 1222,1022 1280,1011
  l5.5 1355,985 1348,900 1355,830 1375,803 1420,804 | 1433,827 1435,900 1430,990 1405,1007 1372,992
  mf 1371,865 1376,843 1383,860 1381,885 1375,890 | 1392,870 1400,833 1402,870 1400,900 1403,935 1418,940 1419,958 1400,950 1375,957 1375,940 1395,932 1400,900
  l6 1213,1302 1203,1265 1207,1235 1225,1215 1270,1203 1302,1210 1308,1302 1232,1312
  l6 1345,1265 1345,1235 1370,1215 1450,1207 | 1450,1235 1445,1265 1430,1278 1362,1267`,

  // 25: content blocks
  `l6.5 78,240 90,210 130,175 180,165 240,167 290,147 350,155 400,140 440,125 452,170 465,280 475,480 470,700 462,900 462,1150 465,1350 462,1500 478,1505
  l5 78,240! 78,320 85,580 95,820 103,1100 100,1300 106,1508
  l6.5 82,258 125,238 200,245 290,240 380,220 455,212
  l5 218,168 222,205 | 252,160 253,212
  df 130,303 145,293 165,297 180,295 190,282 188,298 170,308 150,305 132,312
  mf 215,287 235,285 258,286 250,295 235,305 220,297
  l6 290,290 327,284 | 378,275 424,276
  l6.5 130,445 145,435 190,430 240,400 310,380 440,380 442,430 440,500 445,620 438,672 370,670 270,663 190,652 145,673 133,600 128,520 130,445
  lf 236,505 242,500 248,518 262,508 270,515 266,532 242,535
  m4 282,460 285,540 | 328,490 325,515 330,540
  mf 297,515 303,506 310,520 302,530
  bf 99,512 104,504 110,515 110,535 102,532
  l6.5 428,768 400,775 350,778 290,775 200,752 142,760 142,820 150,900 152,975 180,978 215,1005 290,1013 350,1020 425,1010 438,960 438,793
  mf 280,905 285,838 292,870 292,902
  lf 300,895 310,880 325,885 330,860 335,890 345,922 340,925 328,900 302,903
  l6.5 157,1085 230,1082 300,1097 350,1097 400,1085 433,1075 440,1150 450,1265 440,1300 400,1305 300,1292 160,1275 162,1180 157,1085
  l4.5 282,1100 282,1180
  mf 226,1180 228,1155 240,1165 250,1157 248,1170 235,1175 232,1192 | 258,1158 264,1155 272,1170 270,1182 | 275,1188 282,1165 290,1165 300,1170 308,1180 290,1188 | 320,1165 328,1152 330,1178 325,1185
  l6 243,1357 165,1358 145,1370 138,1430 138,1502 180,1503 228,1508 | 257,1365 250,1430 245,1508
  mf 164,1430 165,1405 172,1400 185,1420 205,1430 200,1435
  l6.5 285,1368 350,1378 380,1367 422,1382 420,1482 370,1487 287,1483 282,1430 285,1368
  mf 301,1452 303,1425 312,1405 316,1435 335,1448 | 346,1415 355,1415 360,1432 385,1412 390,1445 365,1450 348,1440`,

  // 26: gallery list
  `l6.5 572,128 610,140 670,135 740,143 760,155 800,140 870,140 930,150 993,150
  l5 572,128! 572,210 578,400 580,650 578,900 574,1100 573,1370 | 993,150! 985,240 975,480 965,750 958,1000 960,1250 959,1430
  l6.5 575,212 640,205 720,208 800,225 890,248 940,240 985,220
  l4.5 739,150 738,205 | 765,160 766,215
  lf 608,290 625,268 660,260 660,272 635,275 612,290
  l6 715,265 742,260 | 792,277 834,290
  l6.5 610,393 680,385 770,388 855,393 878,430 880,500 876,580 830,583 740,572 610,565 608,480 610,393
  o6.5 606,735 660,725 740,705 855,693 855,760 842,890 800,905 740,902 610,895 606,820 606,735
  l4.5 906,510 910,545 906,590 912,605 918,585 918,540 920,510 | 905,675 900,705 910,733 920,710 918,690 | 880,1080 890,1110 898,1092 | 890,1110 880,1125 902,1128 | 880,1140 882,1168 900,1165 905,1142
  o6.5 625,988 680,980 740,977 795,985 815,1005 818,1030 808,1110 795,1178 740,1170 680,1140 640,1122 605,1118 608,1050 625,988
  lf 550,1378 560,1355 573,1360 573,1395 555,1397
  l6.5 590,1350 605,1330 640,1325 688,1340 686,1390 682,1438 600,1415 592,1390 590,1350
  mf 608,1392 612,1348 622,1360 640,1372 655,1380 652,1390 630,1385
  l6 725,1440 722,1400 728,1345 815,1342 818,1400 808,1468 726,1453
  lf 737,1390 740,1372 780,1370 804,1368 804,1390 770,1387
  l6.5 845,1347 880,1348 930,1342 932,1400 926,1468 840,1450 842,1400 845,1347
  lf 860,1380 870,1360 878,1368 890,1360 893,1380
  df 857,1415 862,1398 875,1405 887,1398 890,1418 870,1415 858,1420`,

  // 27: ratings
  `v6 1112,168 1150,145 1200,130 1260,123 1320,98 1400,90 1490,97 1497,160 1505,380 1515,600 1522,850 1518,1100 1510,1350 1509,1552
  v5 1115,240 1118,400 1125,700 1125,900 1132,1150 1125,1300 1117,1425
  n5 1114,172 1113,210
  v6 1115,213 1180,182 1240,190 1300,162 1380,166 1485,174
  v5 1282,125 1282,175
  v4 1260,140 1260,160
  cf 1205,82 1210,63 1250,60 1275,43 1272,65 1250,73 1225,70
  l6.5 1138,290 1195,277 | 1143,352 1180,338 1263,334
  lf 1138,425 1145,398 1190,395 1230,378 1273,366 1270,378 1230,393 1180,407 1150,410 | 1155,482 1158,465 1200,440 1240,435 1280,433 1276,452 1230,450 1190,458
  lf 1407,345 1420,330 1465,318 1460,328 1425,342 | 1425,388 1445,382 1464,386 1445,395
  l6.5 1427,450 1472,446 | 1392,504 1475,507
  o6.5 1155,640 1200,612 1240,600 1320,612 1380,605 1443,592 1445,680 1447,775 1380,765 1300,750 1200,765 1155,760 1155,640
  l6 1222,652 1235,658 1242,680 1238,710 1228,728 1212,728 1205,705 1207,675z
  mf 1217,690 1221,675 1227,685 1222,702
  o6 1310,620 1297,660 1298,700 1312,722 1328,690 1325,645 | 1310,655 1308,675 1298,682 | 1385,640 1392,660 1383,670 1390,715 1400,720 1405,690 1415,645
  lf 1285,618 1320,625 1310,638 1298,665 1298,640
  l6.5 1163,950 1155,900 1160,850 1180,830 1240,842 1320,838 1430,842 1442,880 1440,960 1425,1000 1400,1008 1350,1010 1290,1003 1240,990 1190,992 1163,975
  l6 1215,885 1200,890 1195,930 1210,965 1235,950 1238,905 1232,890
  mf 1205,915 1212,908 1217,925 1210,935
  l5 1290,910 1298,945 1315,955 1325,920 1320,890 | 1305,910 1302,935
  n6 1397,885 1410,910 1408,940 1395,970 1384,945 1385,905z
  l6.5 1158,1045 1200,1055 1270,1072 1300,1078 1400,1062 1425,1048 1430,1120 1420,1222 1370,1230 1290,1222 1200,1225 1180,1190 1165,1120 1158,1045
  l6 1225,1105 1205,1125 1203,1165 1225,1188 1245,1165 1250,1130
  lf 1212,1145 1225,1132 1250,1125 1252,1140 1230,1142 1215,1150 | 1292,1095 1300,1090 1308,1105 1325,1095 1325,1130 1315,1165 1305,1172 1293,1140
  l5.5 1385,1095 1375,1120 1378,1160 1390,1185 1408,1150 1405,1100 1382,1150
  lf 1280,1070 1325,1075 1300,1088 1295,1095
  l6 1238,1333 1180,1338 1157,1350 1162,1418 | 1253,1343 1256,1430 1215,1432 1182,1447 | 1288,1405 1288,1350 1305,1340 1348,1333 | 1365,1322 1370,1380 1373,1440 1303,1438 | 1404,1425 1404,1340
  mf 1177,1405 1177,1372 1185,1375 1190,1387 1204,1387 1200,1402 | 1300,1395 1303,1372 1315,1385 1322,1368 1333,1385 1340,1372 1358,1378 1358,1412 1340,1395 1315,1395
  l6 1425,1330 1450,1315 1497,1310 1492,1370 1480,1440 1450,1447 1415,1435
  lf 1413,1335 1430,1340 1440,1370 1465,1375 1467,1403 1440,1395 1415,1397 1418,1378 1432,1365 1430,1345
  v4.5 1058,700 1070,685 1075,730 | 1055,770 1080,768 1100,772
  nf 1052,700 1068,700 1068,735 1053,735 | 1055,785 1095,778 1080,795 1058,800
  df 1066,865 1070,820 1078,830 1090,840 1100,825 1109,822 1109,862 1090,855 1070,863
  mf 1065,953 1072,900 1082,898 1085,920 1100,915 1110,895 1110,938 1085,940`,
];
